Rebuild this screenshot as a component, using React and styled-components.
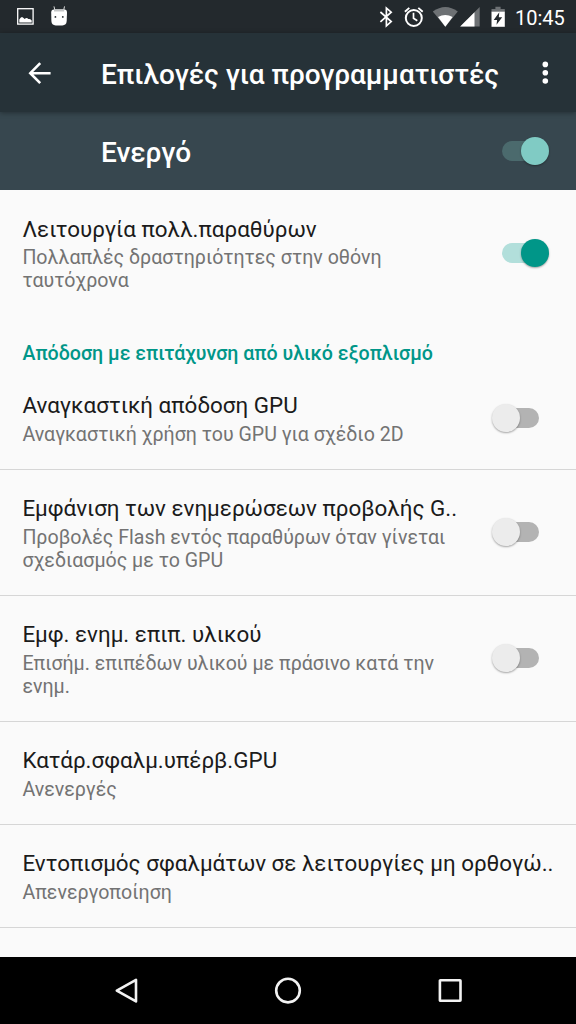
import { useState } from "react";
import styled, { createGlobalStyle } from "styled-components";

const opciones = [
    {
        id: 'gpu',
        title: 'Αναγκαστική απόδοση GPU',
        lines: ['Αναγκαστική χρήση του GPU για σχέδιο 2D'],
        toggle: true
    },
    {
        id: 'views',
        title: 'Εμφάνιση των ενημερώσεων προβολής G..',
        lines: ['Προβολές Flash εντός παραθύρων όταν γίνεται', 'σχεδιασμός με το GPU'],
        toggle: true
    },
    {
        id: 'layers',
        title: 'Εμφ. ενημ. επιπ. υλικού',
        lines: ['Επισήμ. επιπέδων υλικού με πράσινο κατά την', 'ενημ.'],
        toggle: true
    },
    {
        id: 'overdraw',
        title: 'Κατάρ.σφαλμ.υπέρβ.GPU',
        lines: ['Ανενεργές']
    },
    {
        id: 'clip',
        title: 'Εντοπισμός σφαλμάτων σε λειτουργίες μη ορθογώ..',
        lines: ['Απενεργοποίηση']
    }
];

export default function App() {
    const [on, setOn] = useState({ master: true, multi: true });

    const flip = (id) => setOn({ ...on, [id]: !on[id] });

    return (
        <>
            <GlobalStyle />
            <Screen>
                <StatusBar>
                    <PictureIcon />
                    <DroidIcon />
                    <Spacer />
                    <SystemIcons />
                    <Clock>10:45</Clock>
                </StatusBar>
                <AppBar>
                    <BackButton aria-label="Πίσω">
                        <svg width="24" height="24" viewBox="0 0 24 24" fill="none" stroke="#fff" strokeWidth="2.6">
                            <path d="M23.6 12.2H3.4M13.2 2.2L3.3 12.2l9.9 10" />
                        </svg>
                    </BackButton>
                    <h1>Επιλογές για προγραμματιστές</h1>
                    <MoreButton aria-label="Περισσότερα">
                        <svg width="8" height="24" viewBox="0 0 8 24" fill="#fff">
                            <circle cx="4.3" cy="3.4" r="2.8" />
                            <circle cx="4.3" cy="11.7" r="2.8" />
                            <circle cx="4.3" cy="20" r="2.8" />
                        </svg>
                    </MoreButton>
                </AppBar>
                <MasterBar>
                    <h2>Ενεργό</h2>
                    <Toggle dark on={on.master} onClick={() => flip('master')} />
                </MasterBar>
                <List>
                    <Row $tall $plain>
                        <Texts>
                            <Title>Λειτουργία πολλ.παραθύρων</Title>
                            <Summary>Πολλαπλές δραστηριότητες στην οθόνη</Summary>
                            <Summary>ταυτόχρονα</Summary>
                        </Texts>
                        <Toggle on={on.multi} onClick={() => flip('multi')} />
                    </Row>
                    <Category>Απόδοση με επιτάχυνση από υλικό εξοπλισμό</Category>
                    {opciones.map((x) => (
                        <Row key={x.id} $tall={x.lines.length > 1}>
                            <Texts $up>
                                <Title $up>{x.title}</Title>
                                {x.lines.map((l) => <Summary key={l}>{l}</Summary>)}
                            </Texts>
                            {x.toggle && <Toggle on={on[x.id]} onClick={() => flip(x.id)} />}
                        </Row>
                    ))}
                </List>
                <NavBar>
                    <svg width="26" height="28" viewBox="0 0 26 28">
                        <path d="M23 2.8v21.6L3.8 13.6z" />
                    </svg>
                    <svg width="28" height="28" viewBox="0 0 28 28">
                        <circle cx="14" cy="13.6" r="11.8" />
                    </svg>
                    <svg width="26" height="28" viewBox="0 0 26 28">
                        <rect x="2.9" y="3.2" width="20.6" height="20.6" rx="0.5" />
                    </svg>
                </NavBar>
            </Screen>
        </>
    );
}

const Toggle = ({ on, dark, onClick }) => (
    <Switch role="switch" aria-checked={!!on} $on={on} $dark={dark} onClick={onClick}>
        <Track $on={on} $dark={dark} />
        <Thumb $on={on} $dark={dark} />
    </Switch>
);

const PictureIcon = () => (
    <svg width="18" height="18" viewBox="0 0 18 18">
        <rect x="0.7" y="1.7" width="15.4" height="15.4" fill="none" stroke="#fff" strokeWidth="1.3" />
        <path d="M2.3 15.6v-3q1.8-3.4 3.6-2.2l1.8 1.7q2-2 3.6 0 2.6-.6 3.4 1.5v2z" fill="#fff" />
    </svg>
);

const DroidIcon = () => (
    <svg width="18" height="20" viewBox="0 0 18 20">
        <path d="M3.9 4.5L3 .4M12.6 4.5L13.5.4" stroke="#ddd" strokeWidth="1" />
        <path d="M.2 6.5Q.2 3.6 3 3.6h10.4Q16 3.6 16 6.5L15.7 15q-.2 4.4-4.4 4.4H4.7Q.6 19.400.4 15z" fill="#fff" />
        <path d="M3 3.2h10.2v2.3H3z" fill="#c4c6c7" />
        <circle cx="4.4" cy="10.900" r="0.9" fill="#23292d" />
        <circle cx="11.8" cy="10.900" r="0.9" fill="#23292d" />
    </svg>
);

// bluetooth, alarm, wifi, signal and battery
const SystemIcons = () => (
    <svg width="130" height="24" viewBox="378 4 130 24">
        <path d="M380.4 12l10.8 9.6-4.8 4.200V8l4.800 4.200-10.800 9.600" fill="none" stroke="#fff" strokeWidth="1.7" />
        <circle cx="413.8" cy="18" r="8" fill="none" stroke="#fff" strokeWidth="2" />
        <path d="M413.5 12.8v5.400l3.800 2.600" fill="none" stroke="#fff" strokeWidth="1.7" />
        <path d="M404.9 11.700l4.400-3.800M422.700 11.700l-4.400-3.800" stroke="#fff" strokeWidth="1.9" />
        <path d="M432.800 11.400q12.500-9 25 0L445.300 26.700z" fill="#6d7174" />
        <path d="M438 17.100q7.300-4.400 14.600 0l-7.300 9.600z" fill="#fff" />
        <path d="M479.700 7v19.500h-19.500z" fill="#6d7174" />
        <path d="M474.500 12.200v14.300h-14.300z" fill="#fff" />
        <path d="M495.400 6.700h5.200v2.200h4.200v3.300h-13.300V8.900h3.900z" fill="#6d7174" />
        <path d="M491.500 11.700h13.300v15.100h-13.300z" fill="#fff" />
        <path d="M499.300 12.200l-5.600 7.800h3.400l-.6 4.800 5.700-7.500h-3.400z" fill="#23292d" />
    </svg>
);

const GlobalStyle = createGlobalStyle`
    * {
        box-sizing: border-box;
    }
    body {
        margin: 0;
        font-family: Roboto, 'Noto Sans', sans-serif;
        background-color: #FAFAFA;
    }
    h1, h2, h3, p {
        margin: 0;
    }
    button {
        border: 0;
        padding: 0;
        background: none;
    }
    svg {
        display: block;
        flex: none;
    }
`

const Screen = styled.div`
    width: 576px;
    height: 1024px;
    display: flex;
    flex-direction: column;
    overflow: hidden;
    background-color: #FAFAFA;
`

const StatusBar = styled.header`
    height: 33px;
    flex: none;
    display: flex;
    align-items: center;
    gap: 16px;
    padding: 0 11px 1px 17px;
    background-color: #23292D;
    color: #FFFFFF;
`

const Spacer = styled.div`
    flex: 1;
`

const Clock = styled.span`
    width: 50px;
    margin-left: -9px;
    padding-top: 4px;
    font-weight: 400;
    font-size: 20px;
    line-height: 23px;
    white-space: nowrap;
`

const AppBar = styled.div`
    height: 79px;
    flex: none;
    z-index: 1;
    display: flex;
    align-items: center;
    padding: 0 27px;
    background-color: #263238;
    box-shadow: 0 1px 5px rgba(0, 0, 0, 0.35);
    color: #FFFFFF;
    h1 {
        flex: 1;
        padding-top: 3px;
        font-weight: 500;
        font-size: 28px;
        line-height: 33px;
        letter-spacing: -0.04px;
        white-space: nowrap;
    }
`

const BackButton = styled.button`
    width: 74px;
`

const MoreButton = styled.button`
    width: 8px;
`

const MasterBar = styled.div`
    height: 78px;
    flex: none;
    display: flex;
    align-items: center;
    justify-content: space-between;
    padding: 0 27px 0 101px;
    background-color: #37474F;
    color: #FFFFFF;
    h2 {
        padding-top: 3px;
        font-weight: 500;
        font-size: 28px;
        line-height: 33px;
        letter-spacing: -0.04px;
    }
`

const List = styled.main`
    flex: 1;
    min-height: 0;
    overflow: hidden;
`

const Row = styled.div`
    height: ${props => props.$tall ? '126px' : '103px'};
    display: flex;
    align-items: center;
    padding: 0 27px ${props => props.$plain ? '0' : '1px'} 22.4px;
    border-bottom: 1px solid ${props => props.$plain ? 'transparent' : '#D6D6D6'};
`

const Texts = styled.div`
    flex: 1;
    min-width: 0;
    align-self: flex-start;
    padding-top: ${props => props.$up ? '25px' : '26px'};
    white-space: nowrap;
`

const Title = styled.h3`
    margin-bottom: ${props => props.$up ? '5px' : '4px'};
    font-weight: 400;
    font-size: 22.4px;
    line-height: 26px;
    color: #1B1B1B;
`

const Summary = styled.p`
    font-size: 19.6px;
    line-height: 23px;
    color: #737373;
`

const Category = styled.h3`
    height: 51px;
    padding: 26px 22.4px 0;
    font-weight: 500;
    font-size: 19.6px;
    line-height: 23px;
    white-space: nowrap;
    color: #009688;
`

const Switch = styled.button`
    flex: none;
    display: flex;
    align-items: center;
    width: 57px;
    height: 28px;
`

const Track = styled.span`
    width: 37px;
    height: 20px;
    margin-left: 10px;
    border-radius: 10px;
    background-color: ${props => props.$on ? (props.$dark ? '#4B6A6D' : '#B2DFDB') : '#B3B3B3'};
`

const Thumb = styled.span`
    z-index: 1;
    flex: none;
    width: 28px;
    height: 28px;
    margin-left: ${props => props.$on ? '-18px' : '-47px'};
    border-radius: 50%;
    background-color: ${props => props.$on ? (props.$dark ? '#80CBC4' : '#009688') : '#ECECEC'};
    box-shadow: 0 1px 2px rgba(0, 0, 0, 0.35);
`

const NavBar = styled.nav`
    height: 67px;
    flex: none;
    display: flex;
    align-items: center;
    justify-content: space-between;
    padding: 0 113px;
    background-color: #000000;
    svg {
        fill: none;
        stroke: #F2F2F2;
        stroke-width: 2.6;
        stroke-linejoin: round;
    }
`
